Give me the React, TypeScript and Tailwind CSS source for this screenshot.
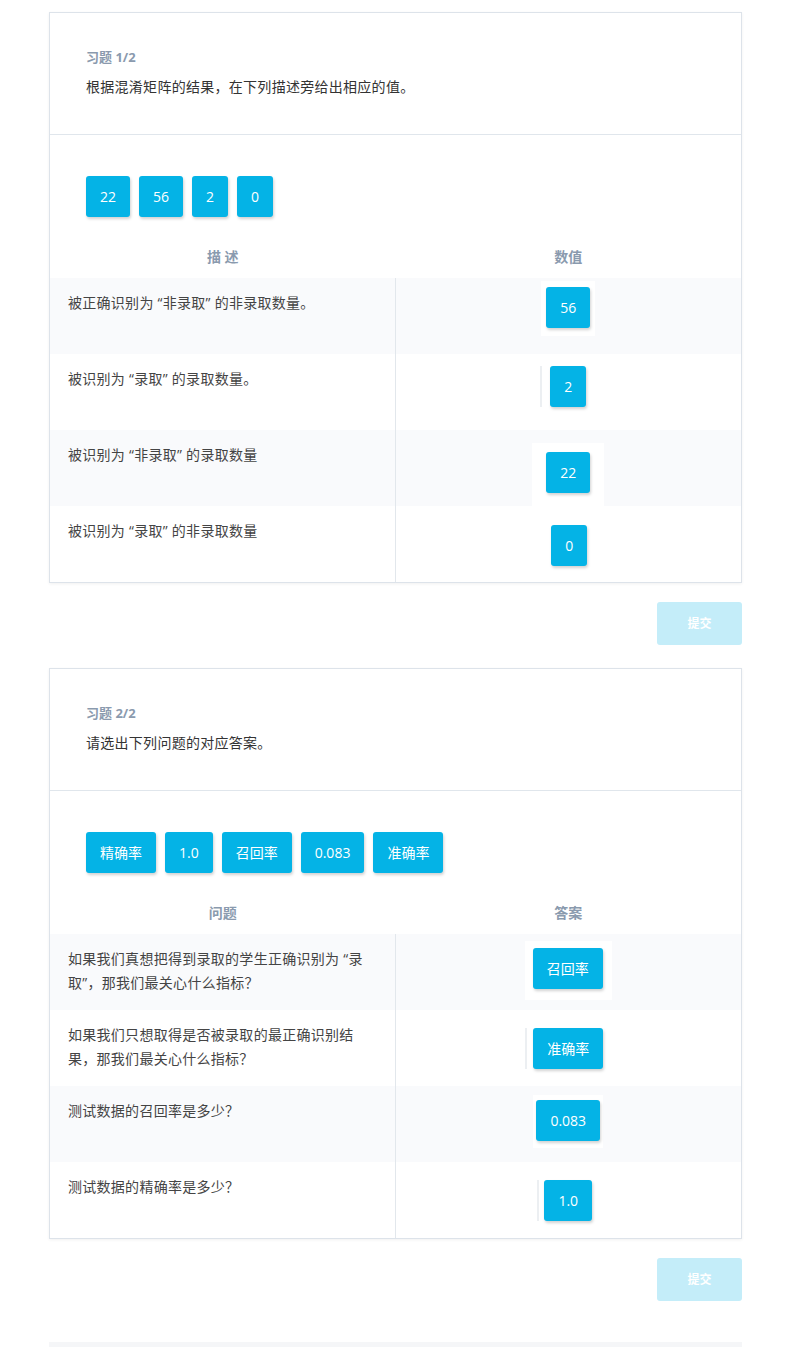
import React from 'react';

type Row = {
  text: string;
  value: string;
  zone: 'box' | 'line';
  zoneCls: string;
};

type Exercise = {
  label: string;
  title: string;
  tokens: string[];
  headLeft: string;
  headRight: string;
  rows: Row[];
};

const EXERCISES: Exercise[] = [
  {
    label: '习题 1/2',
    title: '根据混淆矩阵的结果，在下列描述旁给出相应的值。',
    tokens: ['22', '56', '2', '0'],
    headLeft: '描 述',
    headRight: '数值',
    rows: [
      { text: '被正确识别为 “非录取” 的非录取数量。', value: '56', zone: 'box', zoneCls: 'mt-[3px] px-[5px] pt-[6px] pb-[8px]' },
      { text: '被识别为 “录取” 的录取数量。', value: '2', zone: 'line', zoneCls: 'mt-[12px] pl-[8px] ml-[-10px]' },
      { text: '被识别为 “非录取” 的录取数量', value: '22', zone: 'box', zoneCls: 'mt-[13px] px-[14px] pt-[9px] pb-[13px]' },
      { text: '被识别为 “录取” 的非录取数量', value: '0', zone: 'line', zoneCls: 'mt-[19px] border-transparent' },
    ],
  },
  {
    label: '习题 2/2',
    title: '请选出下列问题的对应答案。',
    tokens: ['精确率', '1.0', '召回率', '0.083', '准确率'],
    headLeft: '问题',
    headRight: '答案',
    rows: [
      { text: '如果我们真想把得到录取的学生正确识别为 “录取”，那我们最关心什么指标？', value: '召回率', zone: 'box', zoneCls: 'mt-[7px] pl-[8px] pr-[9px] pt-[7px] pb-[11px]' },
      { text: '如果我们只想取得是否被录取的最正确识别结果，那我们最关心什么指标？', value: '准确率', zone: 'line', zoneCls: 'mt-[18px] pl-[6px] ml-[-8px]' },
      { text: '测试数据的召回率是多少？', value: '0.083', zone: 'box', zoneCls: 'mt-[9px] px-[3px] pt-[5px] pb-[7px]' },
      { text: '测试数据的精确率是多少？', value: '1.0', zone: 'line', zoneCls: 'mt-[18px] pl-[5px] ml-[-7px]' },
    ],
  },
];

const Chip: React.FC<{ children: React.ReactNode }> = ({ children }) => (
  <div className="h-[41px] px-[14px] flex items-center justify-center rounded-[3px] bg-[#04b3e6] text-white text-[14px] shadow-[1px_2px_3px_rgba(0,0,0,0.18)] whitespace-nowrap">
    {children}
  </div>
);

const Card: React.FC<{ ex: Exercise }> = ({ ex }) => (
  <div>
    <div className="bg-white border border-[#dde3ea] shadow-[0_1px_3px_rgba(0,0,0,0.06)]">
      <div className="px-[36px] pt-[36px] pb-[37px] border-b border-[#e0e6ec]">
        <div className="text-[13px] leading-4 font-bold text-[#8a9aae]">{ex.label}</div>
        <div className="mt-3 text-[14px] leading-5 tracking-[0.02em] text-[#333]">{ex.title}</div>
      </div>

      <div className="pt-[41px]">
        <div className="flex gap-[9px] px-[36px]">
          {ex.tokens.map((t) => (
            <Chip key={t}>{t}</Chip>
          ))}
        </div>

        <div className="grid grid-cols-2 h-[61px] items-end pb-[11px] text-[14px] leading-5 font-bold text-[#8a9aae]">
          <div className="text-center">{ex.headLeft}</div>
          <div className="text-center">{ex.headRight}</div>
        </div>

        {ex.rows.map((r, i) => (
          <div
            key={i}
            className={`grid grid-cols-2 h-[76px] ${i % 2 === 0 ? 'bg-[#f9fafc]' : 'bg-white'}`}
          >
            <div className="border-r border-[#e2e7ec] pl-[18px] pr-[31px] pt-[13px] text-[14px] leading-6 tracking-[0.02em] text-[#444]">
              {r.text}
            </div>
            <div className="flex justify-center items-start">
              {r.zone === 'box' ? (
                <div className={`bg-white ${r.zoneCls}`}>
                  <Chip>{r.value}</Chip>
                </div>
              ) : (
                <div className={`border-l-2 border-[#eceff2] ${r.zoneCls}`}>
                  <Chip>{r.value}</Chip>
                </div>
              )}
            </div>
          </div>
        ))}
      </div>
    </div>

    <div className="flex justify-end mt-[19px]">
      <button className="w-[85px] h-[43px] rounded-[3px] bg-[#c4edf9] text-white text-[12px] font-bold">
        提交
      </button>
    </div>
  </div>
);

export default function App() {
  return (
    <div
      className="w-[809px] min-h-[1347px] bg-white pt-[12px]"
      style={{ fontFamily: '"Open Sans", "Noto Sans CJK SC", sans-serif' }}
    >
      <div className="ml-[49px] w-[693px] flex flex-col gap-[23px]">
        {EXERCISES.map((ex) => (
          <Card key={ex.label} ex={ex} />
        ))}
        <div className="mt-[18px] h-[10px] bg-[#f5f6f8]" />
      </div>
    </div>
  );
}
